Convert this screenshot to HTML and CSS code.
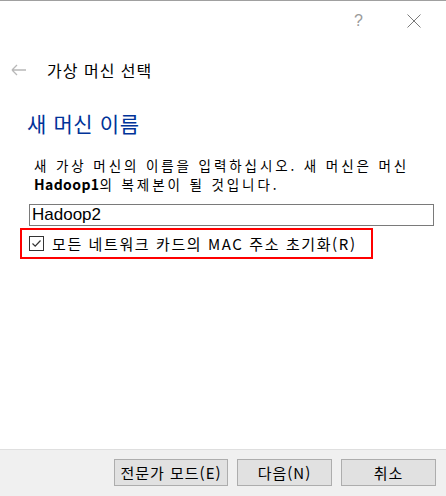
FILE: index.html
```html
<!DOCTYPE html>
<html lang="ko">
<head>
    <meta charset="UTF-8">
    <meta name="viewport" content="width=device-width, initial-scale=1.0">
    <title>가상 머신 복제</title>
    <link rel="stylesheet" href="styles.css">
</head>
<body>

    <div class="titlebar">
        <span class="help">?</span>
        <svg class="close" width="14" height="14" viewBox="0 0 14 14">
            <path d="M0.5 0.5 L13.5 13.5 M13.5 0.5 L0.5 13.5" stroke="#7a7a7a" stroke-width="1" fill="none"/>
        </svg>
    </div>

    <div class="header">
        <svg class="back" width="16" height="12" viewBox="0 0 16 12">
            <path d="M1 6 H15 M1 6 L6 1 M1 6 L6 11" stroke="#b8b8b8" stroke-width="1.3" fill="none"/>
        </svg>
        <span class="header-title">가상 머신 선택</span>
    </div>

    <div class="content">
        <h1 class="page-title">새 머신 이름</h1>
        <p class="desc">새 가상 머신의 이름을 입력하십시오. 새 머신은 머신<br><b>Hadoop1</b>의 복제본이 될 것입니다.</p>
        <div class="name-field">Hadoop2</div>
        <div class="mac-option">
            <span class="checkbox">
                <svg width="13" height="13" viewBox="0 0 13 13">
                    <path d="M2.5 6.5 L5.2 9.2 L10.5 3.5" stroke="#333" stroke-width="1.2" fill="none"/>
                </svg>
            </span>
            <span class="mac-label">모든 네트워크 카드의 MAC 주소 초기화(R)</span>
        </div>
    </div>

    <div class="footer">
        <button class="btn btn-wide">전문가 모드(E)</button>
        <button class="btn">다음(N)</button>
        <button class="btn">취소</button>
    </div>

</body>
</html>
```

FILE: styles.css
```css
html, body {
    margin: 0;
    padding: 0;
}
body {
    width: 446px;
    height: 496px;
    display: flex;
    flex-direction: column;
    background: #fff;
    font-family: "Noto Sans CJK KR", "Liberation Sans", sans-serif;
    color: #000;
    overflow: hidden;
}
.titlebar {
    height: 40px;
    border-top: 1px solid #a0a0a0;
    display: flex;
    align-items: center;
    justify-content: flex-end;
    padding-right: 25px;
    gap: 44px;
    box-sizing: border-box;
}
.help {
    font-family: "Liberation Sans", sans-serif;
    font-size: 16px;
    color: #9a9a9a;
    line-height: 1;
}
.close {
    display: block;
}
.header {
    display: flex;
    align-items: center;
    height: 22px;
    margin-top: 19px;
    padding-left: 11px;
}
.back {
    display: block;
}
.header-title {
    margin-left: 20px;
    font-size: 16px;
    letter-spacing: 1px;
}
.content {
    padding-left: 27px;
    padding-right: 12px;
}
.page-title {
    margin: 29px 0 0 0;
    font-size: 21px;
    font-weight: normal;
    color: #003399;
    letter-spacing: 0.6px;
    line-height: 26px;
}
.desc {
    margin: 20px 0 0 7px;
    font-size: 13.5px;
    line-height: 19px;
    letter-spacing: 2.9px;
}
.desc b {
    font-size: 14px;
    letter-spacing: 0.4px;
}
.name-field {
    margin: 10px 0 0 2px;
    height: 22px;
    border: 1px solid #7a7a7a;
    box-sizing: border-box;
    font-family: "Liberation Sans", sans-serif;
    font-size: 17px;
    line-height: 20px;
    padding-left: 2px;
}
.mac-option {
    margin: 2px 0 0 -7px;
    width: 353px;
    height: 31px;
    border: 2px solid #ff0000;
    box-sizing: border-box;
    display: flex;
    align-items: center;
    padding-left: 7px;
}
.checkbox {
    width: 13px;
    height: 13px;
    border: 1px solid #333;
    display: block;
}
.checkbox svg {
    display: block;
}
.mac-label {
    margin-left: 8px;
    font-size: 15px;
    letter-spacing: 1.6px;
}
.footer {
    margin-top: auto;
    height: 47px;
    background: #f0f0f0;
    border-top: 1px solid #dfdfdf;
    box-sizing: border-box;
    display: flex;
    justify-content: flex-end;
    align-items: flex-start;
    padding: 9px 10px 0 0;
    gap: 9px;
}
.btn {
    width: 95px;
    height: 27px;
    margin: 0;
    padding: 0;
    background: #e1e1e1;
    border: 1px solid #adadad;
    font-family: "Noto Sans CJK KR", "Liberation Sans", sans-serif;
    font-size: 15px;
    color: #000;
    letter-spacing: 1px;
}
.btn-wide {
    width: 114px;
}
```
